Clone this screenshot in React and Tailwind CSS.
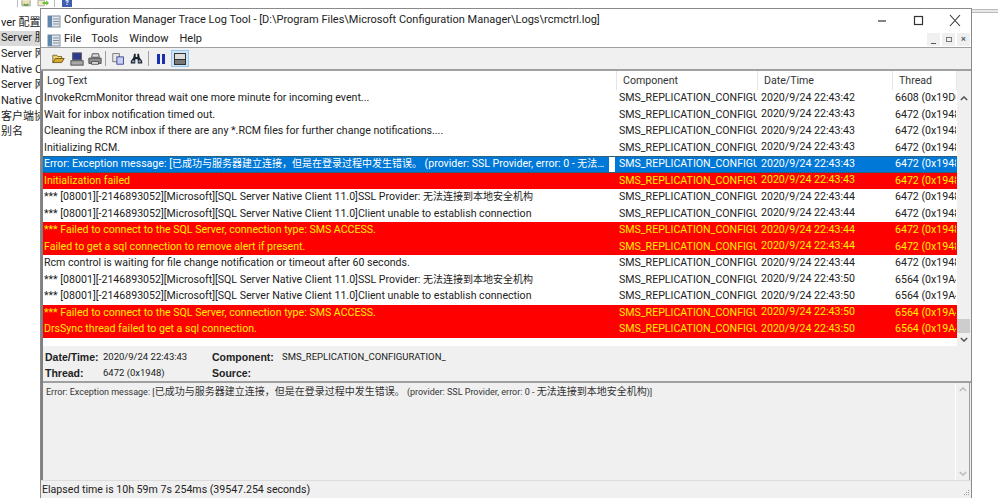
import React from 'react';

const cjk = '"Noto Sans CJK SC"';

const rows = [
  ['InvokeRcmMonitor thread wait one more minute for incoming event...', '2020/9/24 22:43:42', '6608 (0x19D0)', 'n'],
  ['Wait for inbox notification timed out.', '2020/9/24 22:43:43', '6472 (0x1948)', 'n'],
  ['Cleaning the RCM inbox if there are any *.RCM files for further change notifications....', '2020/9/24 22:43:43', '6472 (0x1948)', 'n'],
  ['Initializing RCM.', '2020/9/24 22:43:43', '6472 (0x1948)', 'n'],
  ['Error: Exception message: [已成功与服务器建立连接，但是在登录过程中发生错误。 (provider: SSL Provider, error: 0 - 无法连接到本地安全机构)]', '2020/9/24 22:43:43', '6472 (0x1948)', 's'],
  ['Initialization failed', '2020/9/24 22:43:43', '6472 (0x1948)', 'e'],
  ['*** [08001][-2146893052][Microsoft][SQL Server Native Client 11.0]SSL Provider: 无法连接到本地安全机构', '2020/9/24 22:43:44', '6472 (0x1948)', 'n'],
  ['*** [08001][-2146893052][Microsoft][SQL Server Native Client 11.0]Client unable to establish connection', '2020/9/24 22:43:44', '6472 (0x1948)', 'n'],
  ['*** Failed to connect to the SQL Server, connection type: SMS ACCESS.', '2020/9/24 22:43:44', '6472 (0x1948)', 'e'],
  ['Failed to get a sql connection to remove alert if present.', '2020/9/24 22:43:44', '6472 (0x1948)', 'e'],
  ['Rcm control is waiting for file change notification or timeout after 60 seconds.', '2020/9/24 22:43:44', '6472 (0x1948)', 'n'],
  ['*** [08001][-2146893052][Microsoft][SQL Server Native Client 11.0]SSL Provider: 无法连接到本地安全机构', '2020/9/24 22:43:50', '6564 (0x19A4)', 'n'],
  ['*** [08001][-2146893052][Microsoft][SQL Server Native Client 11.0]Client unable to establish connection', '2020/9/24 22:43:50', '6564 (0x19A4)', 'n'],
  ['*** Failed to connect to the SQL Server, connection type: SMS ACCESS.', '2020/9/24 22:43:50', '6564 (0x19A4)', 'e'],
  ['DrsSync thread failed to get a sql connection.', '2020/9/24 22:43:50', '6564 (0x19A4)', 'e'],
];

const sideItems = ['ver 配置管', 'Server 服', 'Server 网', 'Native C', 'Server 网', 'Native C', '客户端协议', '别名'];

// chinese runs sit at 10px in the original, whatever the latin size is
function Mixed({ text }) {
  return text.split(/([\u3000-\u9fff\uff00-\uffef]+)/).map((part, i) =>
    i % 2 ? <span key={i} className="text-[10px]">{part}</span> : part
  );
}

function LogIcon({ className }) {
  return (
    <svg viewBox="0 0 14 14" className={className}>
      <rect x="1" y="2" width="12" height="11" fill="#dfe6ee" stroke="#7d8ea0" />
      <rect x="1" y="2" width="4" height="11" fill="#5f87ad" />
      <path d="M6 5h6M6 7.5h6M6 10h6" stroke="#8a8f96" />
    </svg>
  );
}

function Toolbar() {
  return (
    <div className="flex items-center h-[23px] pl-[11px] bg-[#f0f0f0] border-b-2 border-[#a0a0a0]">
      <svg viewBox="0 0 16 16" className="w-[13px] h-[13px]">
        <path d="M1 13V4h5l1 1.5h5V8" fill="#f2d479" stroke="#6b5a1e" />
        <path d="M1 13l3-5h11l-3 5z" fill="#d9a92e" stroke="#5e4c14" />
      </svg>
      <svg viewBox="0 0 16 16" className="w-[14px] h-[14px] ml-[5px]">
        <rect x="3" y="1" width="10" height="8" fill="#2c3a8f" stroke="#555" />
        <rect x="1" y="10" width="14" height="5" fill="#a9a9a9" stroke="#444" />
      </svg>
      <svg viewBox="0 0 16 16" className="w-[14px] h-[14px] ml-[4px]">
        <path d="M4 6l1-4h7l1 4z" fill="#ddd" stroke="#444" />
        <path d="M1 7h14v6H1z" fill="#8d8d8d" stroke="#444" />
        <path d="M4 11h8v3H4z" fill="#eee" stroke="#444" />
      </svg>
      <div className="w-px h-[15px] bg-[#a0a0a0] ml-[3px]" />
      <svg viewBox="0 0 16 16" className="w-[13px] h-[13px] ml-[6px]">
        <rect x="1" y="2" width="8" height="10" fill="#e8e8e8" stroke="#666" />
        <rect x="6" y="6" width="8" height="9" fill="#c6d0f0" stroke="#28308c" />
      </svg>
      <svg viewBox="0 0 16 16" className="w-[13px] h-[13px] ml-[5px]">
        <path d="M5 2h2v4h2V2h2l1 5 3 4v3H9.5V9h-3v5H1v-3l3-4z" fill="#1c2430" />
        <circle cx="4" cy="11.5" r="1.5" fill="#8fa0b8" />
        <circle cx="12" cy="11.5" r="1.5" fill="#8fa0b8" />
      </svg>
      <div className="w-px h-[15px] bg-[#a0a0a0] ml-[5px]" />
      <div className="flex gap-[2px] ml-[8px]">
        <div className="w-[3px] h-[10px] bg-[#1a2fb0]" />
        <div className="w-[3px] h-[10px] bg-[#1a2fb0]" />
      </div>
      <div className="flex items-center justify-center w-[18px] h-[17px] ml-[6px] bg-[#cce4f7] border border-[#99c9ef]">
        <div className="flex flex-col w-[12px] h-[12px] border border-[#333] bg-[#777]">
          <div className="h-[5px] bg-[#ddd]" />
          <div className="h-px bg-[#333]" />
        </div>
      </div>
    </div>
  );
}

function Chevron({ up, color }) {
  return (
    <svg viewBox="0 0 10 6" className="w-[8px] h-[5px]">
      <path d={up ? 'M1 5l4-4 4 4' : 'M1 1l4 4 4-4'} fill="none" stroke={color} strokeWidth="1.8" />
    </svg>
  );
}

function LogRow({ row }) {
  const [text, date, thread, kind] = row;
  const tone =
    kind === 'e'
      ? 'bg-[#ff0000] text-[#ffee00]'
      : kind === 's'
      ? 'bg-[#0078d7] text-white border-y border-dotted border-[#5a4a20]'
      : 'bg-white text-[#222]';
  return (
    <div className={`flex h-[16.5px] items-center leading-none whitespace-nowrap ${tone}`}>
      <div className="flex items-center self-stretch w-[574px] pl-[1px] pr-[2px]">
        <div className="flex-1 min-w-0 overflow-hidden text-ellipsis leading-[14px]"><Mixed text={text} /></div>
        {kind === 's' && <div className="self-stretch w-[6px] bg-white" />}
      </div>
      <div className="w-[141px] pl-[2px] pr-[1px]">
        <div className="overflow-hidden leading-[14px]">SMS_REPLICATION_CONFIGURATION_MONITOR</div>
      </div>
      <div className="w-[135px] pl-[3px]">{date}</div>
      <div className="w-[64px] pl-[2px] pr-[1px]">
        <div className="overflow-hidden leading-[14px]">{thread}</div>
      </div>
    </div>
  );
}

function DetailLabel({ children }) {
  return <div className="font-bold text-[10.5px] leading-[15px]" style={{ fontFamily: '"Liberation Sans", sans-serif' }}>{children}</div>;
}

export default function App() {
  return (
    <div
      className="flex flex-col w-[998px] h-[498px] overflow-hidden bg-white text-[10.6px]"
      style={{ fontFamily: `Roboto, ${cjk}, sans-serif` }}
    >
      <div className="flex items-start h-[8px] pl-[17px] overflow-hidden">
        <div className="w-px h-[7px] bg-[#bbb]" />
        <svg viewBox="0 0 12 7" className="w-[11px] h-[7px] ml-[3px]">
          <path d="M1 0v6h9V0" fill="#e8e0b0" stroke="#999" />
          <path d="M3 4a3 3 0 0 0 5 0" fill="none" stroke="#3e9a3a" strokeWidth="1.5" />
        </svg>
        <svg viewBox="0 0 13 7" className="w-[12px] h-[7px] ml-[5px]">
          <path d="M1 0h7v6H1z" fill="#f2ecc0" stroke="#aaa" />
          <path d="M6 2h4V0l3 3-3 3V4H6z" fill="#6fc13c" />
        </svg>
        <div className="w-px h-[7px] bg-[#bbb] ml-[5px]" />
        <div className="flex justify-center w-[10px] h-[7px] ml-[7px] bg-[#3d5fb0] text-white text-[7px] font-bold leading-none">?</div>
      </div>
      <div className="flex flex-1 min-h-0">
        <div className="flex flex-col w-[40px] pt-[7px] overflow-hidden whitespace-nowrap text-[#222] text-[11px]">
          {sideItems.map((s, i) => (
            <div key={i} className={`flex items-center h-[15.7px] shrink-0 pl-[1px] ${i === 1 ? 'bg-[#d9d9d9]' : ''}`}>
              {s}
            </div>
          ))}
        </div>
        <div className="flex flex-col w-[932px] border-t border-l border-r border-[#8a8a8a] bg-[#f0f0f0]">
          <div className="flex items-center h-[23px] bg-white pl-[6px] text-[#222] text-[11px]">
            <LogIcon className="w-[14px] h-[14px]" />
            <span className="ml-[3px] flex-1">Configuration Manager Trace Log Tool - [D:\Program Files\Microsoft Configuration Manager\Logs\rcmctrl.log]</span>
            <svg viewBox="0 0 83 14" className="w-[83px] h-[14px] mr-[10px]">
              <path d="M0 7h8" stroke="#333" strokeWidth="1.2" />
              <rect x="36.5" y="2.5" width="8" height="8" fill="none" stroke="#333" strokeWidth="1.2" />
              <path d="M72 1l10 11M82 1L72 12" stroke="#333" strokeWidth="1.1" />
            </svg>
          </div>
          <div className="flex items-center h-[16px] bg-white pl-[6px] text-[#222] text-[11px] border-b border-[#a0a0a0]">
            <LogIcon className="w-[14px] h-[14px]" />
            <span className="ml-[3px]">File</span>
            <span className="ml-[10px]">Tools</span>
            <span className="ml-[11px]">Window</span>
            <span className="ml-[11px]">Help</span>
            <div className="flex gap-[2px] ml-auto mr-[1px]">
              <div className="flex items-end justify-center w-[13px] h-[13px] bg-[#f0f0f0] pb-[2px]"><div className="w-[5px] h-[1.5px] bg-[#555]" /></div>
              <div className="flex items-center justify-center w-[13px] h-[13px] bg-[#f0f0f0]"><div className="w-[6px] h-[5px] border border-[#777]" /></div>
              <div className="flex items-center justify-center w-[13px] h-[13px] bg-[#f0f0f0] text-[9px] text-[#567] font-bold">×</div>
            </div>
          </div>
          <Toolbar />
          <div className="flex flex-col flex-1 min-h-0 border-l-2 border-[#808080]">
            <div className="flex">
              <div className="flex flex-col w-[914px] bg-white text-[#222]">
                <div className="flex h-[19px] items-center text-[#333]">
                  <div className="w-[574px] pl-[4px] border-r border-[#e5e5e5] h-full flex items-center">Log Text</div>
                  <div className="w-[141px] pl-[6px] border-r border-[#e5e5e5] h-full flex items-center">Component</div>
                  <div className="w-[135px] pl-[6px] border-r border-[#e5e5e5] h-full flex items-center">Date/Time</div>
                  <div className="w-[64px] pl-[6px] border-r border-[#e5e5e5] h-full flex items-center">Thread</div>
                </div>
                {rows.map((r, i) => <LogRow key={i} row={r} />)}
                <div className="h-[8.5px]" />
              </div>
              <div className="flex flex-col w-[13px] pt-[19px] bg-[#f0f0f0]">
                <div className="flex items-center justify-center h-[16px]"><Chevron up color="#555" /></div>
                <div className="flex-1" />
                <div className="h-[14px] bg-[#cdcdcd]" />
                <div className="flex items-center justify-center h-[13px]"><Chevron color="#555" /></div>
              </div>
            </div>
            <div className="grid grid-cols-[58px_109px_70px_1fr] h-[37px] pl-[2px] pt-[4px] text-[#222] border-b-2 border-[#a0a0a0]">
              <DetailLabel>Date/Time:</DetailLabel>
              <div className="text-[9.5px] leading-[13px]">2020/9/24 22:43:43</div>
              <DetailLabel>Component:</DetailLabel>
              <div className="text-[9.5px] leading-[13px]">SMS_REPLICATION_CONFIGURATION_</div>
              <DetailLabel>Thread:</DetailLabel>
              <div className="text-[9.5px] leading-[13px]">6472 (0x1948)</div>
              <DetailLabel>Source:</DetailLabel>
              <div />
            </div>
            <div className="flex flex-1 min-h-0 mr-[1px] border-r border-[#a0a0a0]">
              <div className="flex-1 pl-[3px] pt-[1px] text-[9px] text-[#333] whitespace-nowrap">
                <Mixed text="Error: Exception message: [已成功与服务器建立连接，但是在登录过程中发生错误。 (provider: SSL Provider, error: 0 - 无法连接到本地安全机构)]" />
              </div>
              <div className="flex flex-col justify-between items-center w-[14px] py-[4px] border-l border-white">
                <Chevron up color="#bbb" />
                <Chevron color="#bbb" />
              </div>
            </div>
          </div>
          <div className="flex items-center h-[18px] pl-px border-t border-[#dcdcdc] text-[#222]">
            <span className="flex-1">Elapsed time is 10h 59m 7s 254ms (39547.254 seconds)</span>
            <svg viewBox="0 0 8 8" className="w-[8px] h-[8px] self-end mb-px mr-px">
              <path d="M6 1h1v1H6zM4 3h1v1H4zM6 3h1v1H6zM2 5h1v1H2zM4 5h1v1H4zM6 5h1v1H6z" fill="#999" />
            </svg>
          </div>
        </div>
        <div className="flex-1 pt-[1px]">
          <div className="h-[4px] bg-[#e8e8e8] border-y border-[#bbb]" />
        </div>
      </div>
    </div>
  );
}
